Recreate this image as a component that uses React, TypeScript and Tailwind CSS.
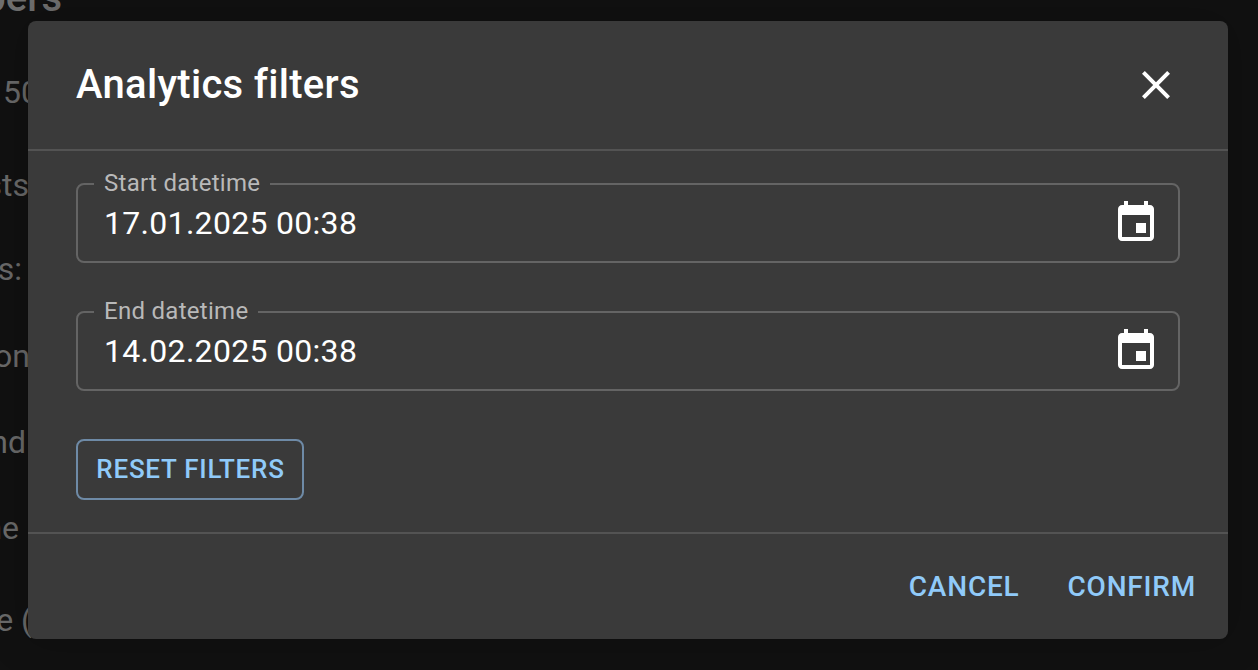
const font = "font-['Roboto','Liberation_Sans',sans-serif]";

function EventIcon() {
  return (
    <svg viewBox="0 0 24 24" className="w-12 h-12 fill-white shrink-0">
      <path d="M17 12h-5v5h5v-5zM16 1v2H8V1H6v2H5c-1.11 0-1.99.9-1.99 2L3 19c0 1.1.89 2 2 2h14c1.1 0 2-.9 2-2V5c0-1.1-.9-2-2-2h-1V1h-2zm3 18H5V8h14v11z" />
    </svg>
  );
}

function DateField({ label, value }: { label: string; value: string }) {
  return (
    <div className="relative h-20 rounded-lg border-2 border-[#646464] pl-[26px] pr-[18px] flex items-center justify-between">
      <span className="absolute left-[16px] -top-[18px] px-[10px] bg-[#3a3a3a] text-[24px] leading-[32px] text-[#b9b9b9] tracking-[0.012em]">
        {label}
      </span>
      <span className="text-[32px] leading-[40px] text-white tracking-[0.00938em] -mt-[1px]">{value}</span>
      <EventIcon />
    </div>
  );
}

const lines = [
  { text: "Total 50", cls: "w-[39px] mt-[50px]" },
  { text: "Requests", cls: "w-[29px] mt-[53px]" },
  { text: "Errors:", cls: "w-[22px] mt-[44px]" },
  { text: "Conversion", cls: "w-[30px] mt-[47px]" },
  { text: "Second", cls: "w-[26px] mt-[46px]" },
  { text: "Runtime", cls: "w-[19px] mt-[46px]" },
  { text: "Average (", cls: "w-[32px] mt-[52px]" },
];

export default function App() {
  return (
    <div className={`relative w-[1258px] h-[670px] overflow-hidden bg-[#111111] ${font}`}>
      <div className="flex flex-col items-end w-[62px] -mt-[26px] text-[32px] leading-[40px] text-[#6a6a6a] whitespace-nowrap">
        <div className="flex justify-end w-[62px] text-[40px] leading-[48px] font-medium text-[#6f6f6f]">Members</div>
        <div className="flex flex-col self-start">
          {lines.map((l) => (
            <div key={l.text} className={`flex justify-end ${l.cls}`}>
              {l.text}
            </div>
          ))}
        </div>
      </div>

      <div className="absolute inset-0 pl-[28px] pt-[21px]">
        <div className="w-[1200px] h-[618px] rounded-lg bg-[#3a3a3a] flex flex-col text-white shadow-[0_0_40px_rgba(0,0,0,0.25)]">
          <div className="h-[128px] px-[48px] flex items-center justify-between shrink-0">
            <h2 className="text-[40px] leading-[56px] font-medium tracking-[0.0075em]">Analytics filters</h2>
            <svg viewBox="0 0 24 24" className="w-12 h-12 fill-white">
              <path d="M19 6.41 17.59 5 12 10.59 6.41 5 5 6.41 10.59 12 5 17.59 6.41 19 12 13.41 17.59 19 19 17.59 13.41 12z" />
            </svg>
          </div>
          <div className="h-[2px] bg-[#535353] shrink-0" />
          <div className="flex-1 px-[48px] pt-[32px] flex flex-col items-stretch">
            <div className="flex flex-col gap-[48px]">
              <DateField label="Start datetime" value="17.01.2025 00:38" />
              <DateField label="End datetime" value="14.02.2025 00:38" />
            </div>
            <div className="mt-[48px]">
              <button className="h-[61px] w-[228px] pl-[1px] rounded-lg border-2 border-[#6e8aa6] text-[#90caf9] text-[26px] font-medium tracking-[0.02857em] flex items-center justify-center">
                RESET FILTERS
              </button>
            </div>
          </div>
          <div className="h-[2px] bg-[#535353] shrink-0" />
          <div className="h-[105px] flex items-center justify-end gap-[48px] pr-[32px] text-[#90caf9] text-[28px] font-medium tracking-[0.02857em] shrink-0">
            <button>CANCEL</button>
            <button>CONFIRM</button>
          </div>
        </div>
      </div>
    </div>
  );
}
